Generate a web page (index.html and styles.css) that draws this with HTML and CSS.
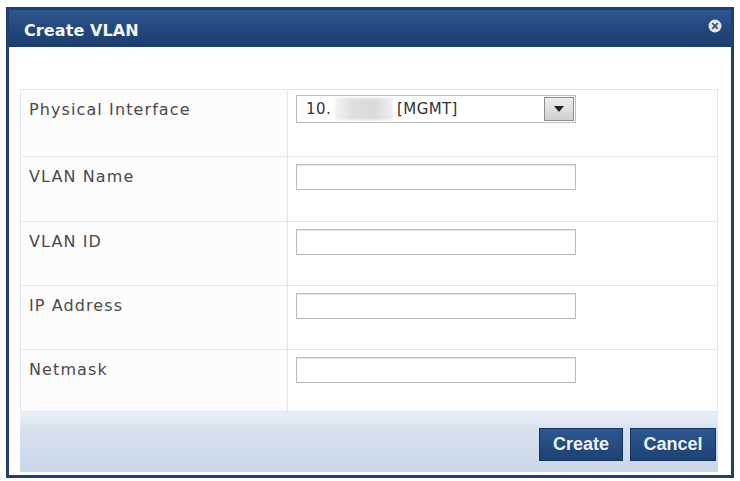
FILE: index.html
```html
<!DOCTYPE html>
<html>
<head>
	<title>Create VLAN</title>
	<meta charset="utf-8" />
	<link rel="stylesheet" href="styles.css">
</head>
<body>
	<div class="dialog">
		<div class="titlebar">
			<span class="title">Create VLAN</span>
			<span class="close">
				<svg width="14" height="14" viewBox="0 0 14 14">
					<circle cx="7" cy="7" r="6.5" fill="#e4e8ee"/>
					<path d="M4.7 4.7 L9.3 9.3 M9.3 4.7 L4.7 9.3" stroke="#3a4f6e" stroke-width="1.7" stroke-linecap="round"/>
				</svg>
			</span>
		</div>
		<div class="content">
			<div class="form">
				<div class="row r1">
					<div class="label">Physical Interface</div>
					<div class="field">
						<div class="select">
							<span class="value">10.<span class="blur"></span>[MGMT]</span>
							<span class="arrow">
								<svg width="10" height="6" viewBox="0 0 10 6"><path d="M0 0 L10 0 L5 6 Z" fill="#222"/></svg>
							</span>
						</div>
					</div>
				</div>
				<div class="row r2">
					<div class="label">VLAN Name</div>
					<div class="field"><input type="text" class="input"></div>
				</div>
				<div class="row r3">
					<div class="label">VLAN ID</div>
					<div class="field"><input type="text" class="input"></div>
				</div>
				<div class="row r4">
					<div class="label">IP Address</div>
					<div class="field"><input type="text" class="input"></div>
				</div>
				<div class="row r5">
					<div class="label">Netmask</div>
					<div class="field"><input type="text" class="input"></div>
				</div>
			</div>
			<div class="footer">
				<button class="btn btn-create">Create</button>
				<button class="btn btn-cancel">Cancel</button>
			</div>
		</div>
	</div>
</body>
</html>
```

FILE: styles.css
```css
*{
	padding: 0px;
	margin: 0px;
	box-sizing: border-box;
}
body{
	background: #fff;
	font-family: "DejaVu Sans", Verdana, sans-serif;
}
.dialog{
	width: 728px;
	height: 471px;
	margin: 7px 0 0 6px;
	border: 3px solid #21406f;
	background: #fff;
	display: flex;
	flex-direction: column;
}
.titlebar{
	height: 38px;
	background: linear-gradient(to bottom, #2d5890 0%, #24497e 45%, #1c3d6e 100%);
	display: flex;
	align-items: center;
	justify-content: space-between;
	padding: 3px 9px 0 15px;
}
.title{
	color: #f2f5fa;
	font-weight: bold;
	font-size: 16px;
	letter-spacing: 0.1px;
}
.close{
	display: flex;
	margin-top: -8px;
}
.content{
	flex: 1;
	padding: 42px 13px 3px 11px;
	display: flex;
	flex-direction: column;
}
.form{
	border: 1px solid #e2e6eb;
	border-bottom: none;
}
.row{
	display: grid;
	grid-template-columns: 267px 1fr;
	border-bottom: 1px solid #e2e6eb;
}
.r1{ height: 67px; }
.r2{ height: 65px; }
.r3, .r4{ height: 64px; }
.r5{ height: 62px; }
.label{
	border-right: 1px solid #e2e6eb;
	background: #fcfcfd;
	color: #4a4a4a;
	font-size: 16px;
	letter-spacing: 1.1px;
	padding: 10px 8px;
}
.field{
	padding: 7px 8px;
}
.r1 .field{
	padding-top: 5px;
}
.input{
	display: block;
	width: 280px;
	height: 26px;
	border: 1px solid #bdbdbd;
	box-shadow: inset 0 1px 1px #e6e6e6;
	background: #fff;
}
.select{
	width: 280px;
	height: 28px;
	border: 1px solid #bdbdbd;
	display: flex;
	align-items: center;
	justify-content: space-between;
	padding: 0 1px 0 9px;
	background: #fff;
}
.value{
	font-size: 15px;
	letter-spacing: 0.4px;
	color: #333;
	display: flex;
	align-items: center;
}
.blur{
	display: inline-block;
	width: 58px;
	height: 22px;
	margin: 0 4px 0 4px;
	background: linear-gradient(to right, #f4f4f4, #dedede 30%, #dadada 70%, #f0f0f0);
	filter: blur(1px);
}
.arrow{
	width: 30px;
	height: 24px;
	border: 1px solid #8d8d8d;
	background: linear-gradient(to bottom, #eeeeee, #cfcfcf);
	display: flex;
	align-items: center;
	justify-content: center;
}
.footer{
	height: 60px;
	background: linear-gradient(to bottom, #eaf0f7 0%, #d6e1ee 30%, #c9d7e9 100%);
	display: flex;
	justify-content: flex-end;
	gap: 7px;
	padding: 16px 2px 0 0;
}
.btn{
	height: 33px;
	border: 1px solid #16345e;
	background: linear-gradient(to bottom, #2b5790, #1d4275);
	color: #eef3fa;
	font-family: "Liberation Sans", Arial, sans-serif;
	font-weight: bold;
	font-size: 18px;
}
.btn-create{
	width: 84px;
}
.btn-cancel{
	width: 86px;
}
```
